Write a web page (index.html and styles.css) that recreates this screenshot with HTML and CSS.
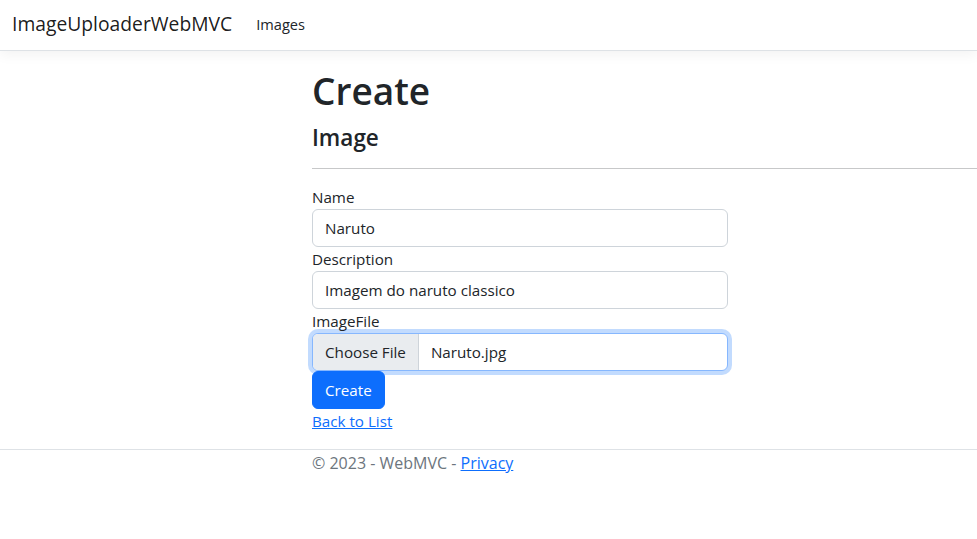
FILE: index.html
```html
<!DOCTYPE html>
<html lang="en">
<head>
<meta charset="utf-8">
<title>Create - ImageUploaderWebMVC</title>
<link rel="stylesheet" href="styles.css">
</head>
<body>
<header>
  <nav class="navbar">
    <a class="navbar-brand" href="#">ImageUploaderWebMVC</a>
    <a class="nav-link" href="#">Images</a>
  </nav>
</header>
<main class="container">
  <h1 class="title">Create</h1>
  <h4 class="subtitle">Image</h4>
  <hr class="divider">
  <div class="form-col">
    <form class="form">
      <div class="form-group">
        <label class="control-label" for="name">Name</label>
        <input class="form-control" id="name" type="text" value="Naruto">
      </div>
      <div class="form-group">
        <label class="control-label" for="desc">Description</label>
        <input class="form-control" id="desc" type="text" value="Imagem do naruto classico">
      </div>
      <div class="form-group">
        <label class="control-label">ImageFile</label>
        <div class="file-control focused">
          <span class="file-button">Choose File</span>
          <span class="file-name">Naruto.jpg</span>
        </div>
      </div>
      <div class="form-group">
        <button class="btn-primary" type="button">Create</button>
      </div>
    </form>
  </div>
  <div class="back">
    <a class="link" href="#">Back to List</a>
  </div>
</main>
<footer class="footer">
  <div class="footer-inner">&copy; 2023 - WebMVC - <a class="link" href="#">Privacy</a></div>
</footer>
</body>
</html>
```
FILE: styles.css
```css
html, body {
  margin: 0;
  padding: 0;
}
body {
  font-family: "Open Sans", "Noto Sans", sans-serif;
  font-size: 15.2px;
  line-height: 24px;
  color: #212529;
  background: #fff;
}
.navbar {
  display: flex;
  align-items: center;
  height: 50px;
  padding: 0 12px;
  border-bottom: 1px solid #dee2e6;
  box-shadow: 0 4px 12px rgba(0, 0, 0, 0.05);
  margin-bottom: 16px;
}
.navbar-brand {
  font-size: 19.3px;
  color: rgba(0, 0, 0, 0.9);
  text-decoration: none;
  margin-right: 16px;
  margin-top: -2px;
}
.nav-link {
  font-size: 14.6px;
  color: #212529;
  text-decoration: none;
  padding: 0 8px;
  margin-top: -2px;
}
.container {
  margin-left: 300px;
  padding: 0 0 16px 12px;
}
.title {
  font-size: 37px;
  font-weight: 600;
  line-height: 48px;
  margin: 0 0 8px;
}
.subtitle {
  font-size: 22.5px;
  font-weight: 600;
  line-height: 29px;
  margin: 0;
}
.divider {
  border: 0;
  border-top: 1px solid #212529;
  opacity: 0.25;
  margin: 16px 0;
}
.form-col {
  width: 416px;
}
.form {
  margin: 0;
}
.control-label {
  display: block;
  line-height: 24px;
}
.form-control {
  display: block;
  box-sizing: border-box;
  width: 100%;
  height: 38px;
  padding: 6px 12px;
  font: inherit;
  color: #212529;
  border: 1px solid #ced4da;
  border-radius: 6px;
  background: #fff;
  outline: none;
}
.file-control {
  display: flex;
  align-items: stretch;
  box-sizing: border-box;
  height: 38px;
  border: 1px solid #ced4da;
  border-radius: 6px;
  overflow: hidden;
  background: #fff;
}
.file-control.focused {
  border-color: #86b7fe;
  box-shadow: 0 0 0 4px rgba(13, 110, 253, 0.25);
}
.file-button {
  display: flex;
  align-items: center;
  padding: 0 12px;
  background: #e9ecef;
  border-right: 1px solid #ced4da;
  color: #212529;
}
.file-name {
  display: flex;
  align-items: center;
  padding-left: 12px;
}
.btn-primary {
  font: inherit;
  color: #fff;
  background: #0d6efd;
  border: 1px solid #0d6efd;
  border-radius: 6px;
  height: 38px;
  padding: 0 12px;
}
.back {
  line-height: 24px;
}
.link {
  color: #0d6efd;
  text-decoration: underline;
}
.footer {
  border-top: 1px solid #dee2e6;
  color: #6c757d;
  font-size: 16px;
  line-height: 26px;
}
.footer-inner {
  padding-left: 312px;
}
```
